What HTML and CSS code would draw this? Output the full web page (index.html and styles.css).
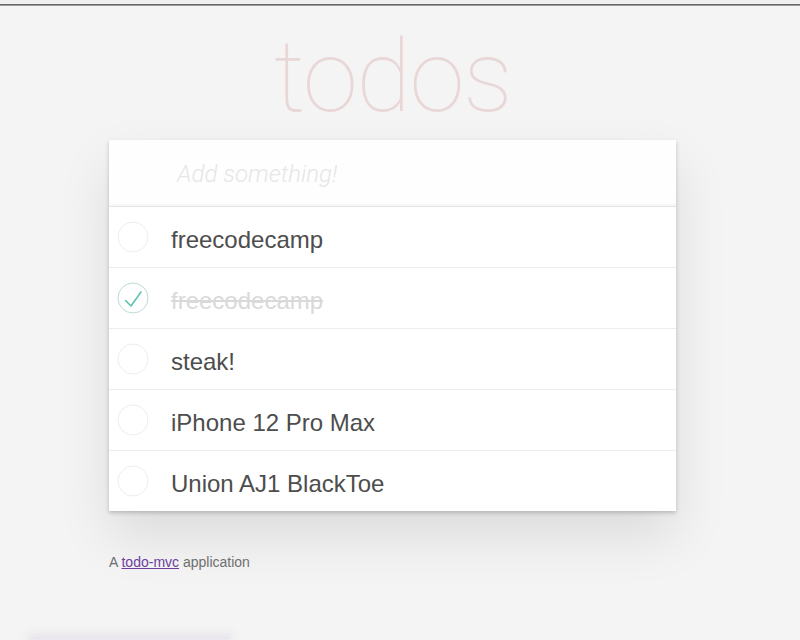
FILE: index.html
```html
<!DOCTYPE html>
<html lang="en">
<head>
<meta charset="utf-8">
<title>todos</title>
<link rel="stylesheet" href="styles.css">
</head>
<body>
<div class="topbar"></div>
<div class="page">
  <section class="todoapp">
    <h1 class="title">todos</h1>
    <div class="card">
      <input class="new-todo" type="text" placeholder="Add something!">
      <ul class="todo-list">
        <li class="todo">
          <svg class="toggle" width="32" height="32" viewBox="0 0 32 32"><circle cx="16" cy="16" r="15" fill="none" stroke="#ededed" stroke-width="1"/></svg>
          <span class="label">freecodecamp</span>
        </li>
        <li class="todo done">
          <svg class="toggle" width="32" height="32" viewBox="0 0 32 32"><circle cx="16" cy="16" r="15" fill="none" stroke="#bddad5" stroke-width="1"/><path d="M8.5 18.5 L14 24 L24 10" fill="none" stroke="#5dc2af" stroke-width="1.6" stroke-linecap="round" stroke-linejoin="round"/></svg>
          <span class="label">freecodecamp</span>
        </li>
        <li class="todo">
          <svg class="toggle" width="32" height="32" viewBox="0 0 32 32"><circle cx="16" cy="16" r="15" fill="none" stroke="#ededed" stroke-width="1"/></svg>
          <span class="label">steak!</span>
        </li>
        <li class="todo">
          <svg class="toggle" width="32" height="32" viewBox="0 0 32 32"><circle cx="16" cy="16" r="15" fill="none" stroke="#ededed" stroke-width="1"/></svg>
          <span class="label">iPhone 12 Pro Max</span>
        </li>
        <li class="todo">
          <svg class="toggle" width="32" height="32" viewBox="0 0 32 32"><circle cx="16" cy="16" r="15" fill="none" stroke="#ededed" stroke-width="1"/></svg>
          <span class="label">Union AJ1 BlackToe</span>
        </li>
      </ul>
    </div>
    <p class="info">A <a href="#">todo-mvc</a> application</p>
  </section>
  <div class="glow"></div>
</div>
</body>
</html>
```

FILE: styles.css
```css
html, body {
  margin: 0;
  padding: 0;
  height: 640px;
  overflow: hidden;
}
body {
  background: #f4f4f4;
  font-family: "Liberation Sans", Arial, sans-serif;
  color: #4d4d4d;
}
.topbar {
  height: 4px;
  background: #efefef;
  border-bottom: 1px solid #666;
  box-shadow: 0 1px 0 #9a9a9a;
}
.page {
  width: 785px;
}
.todoapp {
  width: 567px;
  margin: 0 auto;
}
.title {
  margin: 0;
  padding-top: 22px;
  height: 135px;
  box-sizing: border-box;
  text-align: center;
  font-family: Roboto, "Liberation Sans", sans-serif;
  font-weight: 100;
  font-size: 100px;
  line-height: 1;
  color: rgba(175, 47, 47, 0.15);
  letter-spacing: -1.5px;
}
.card {
  background: #fff;
  box-shadow: 0 2px 4px 0 rgba(0, 0, 0, 0.2), 0 25px 50px 0 rgba(0, 0, 0, 0.1);
}
.new-todo {
  display: block;
  width: 100%;
  height: 66px;
  box-sizing: border-box;
  margin: 0;
  padding: 2px 16px 0 68px;
  border: none;
  outline: none;
  background: rgba(0, 0, 0, 0.003);
  box-shadow: inset 0 -2px 1px rgba(0, 0, 0, 0.03);
  font-family: "Liberation Sans", Arial, sans-serif;
  font-size: 24px;
  color: #4d4d4d;
}
.new-todo::placeholder {
  font-family: Roboto, "Liberation Sans", sans-serif;
  font-style: italic;
  font-weight: 300;
  color: #e6e6e6;
}
.todo-list {
  list-style: none;
  margin: 0;
  padding: 0;
  border-top: 1px solid #e6e6e6;
}
.todo {
  display: flex;
  align-items: center;
  height: 60px;
  border-bottom: 1px solid #ededed;
}
.todo:last-child {
  border-bottom: none;
}
.toggle {
  flex: none;
  margin-left: 8px;
  display: block;
}
.label {
  flex: 1;
  padding: 18px 15px 13px 22px;
  line-height: 29px;
  font-size: 24px;
  color: #4d4d4d;
}
.done .label {
  color: #d9d9d9;
  text-decoration: line-through;
}
.info {
  margin: 43px 0 0 0;
  font-size: 14px;
  line-height: 17px;
  color: #6e6e6e;
}
.info a {
  color: #6b3fa0;
  text-decoration: underline;
}
.glow {
  width: 200px;
  height: 2px;
  margin: 66px 0 0 30px;
  border-radius: 2px;
  background: #e9e6ee;
  box-shadow: 0 0 10px 3px rgba(120, 100, 160, 0.12);
}
```
